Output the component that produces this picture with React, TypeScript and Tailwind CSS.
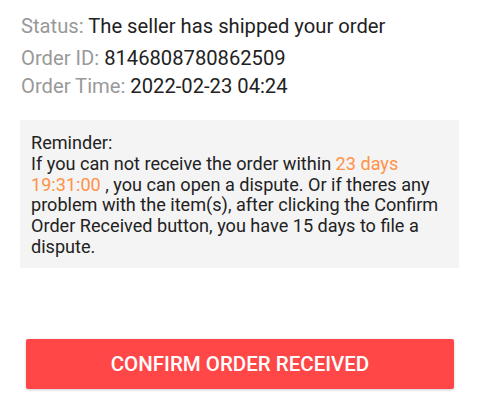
export default function App() {
  return (
    <div className="w-[480px] h-[417px] bg-white font-['Roboto',sans-serif] overflow-hidden">
      <div className="px-[21px] pt-[14px] text-[20.2px] leading-[24px] text-[#222]">
        <div>
          <span className="text-[#999]">Status: </span>The seller has shipped your order
        </div>
        <div className="mt-[8px]">
          <span className="text-[#999]">Order ID: </span>8146808780862509
        </div>
        <div className="mt-[4px]">
          <span className="text-[#999]">Order Time: </span>2022-02-23 04:24
        </div>
      </div>

      <div className="mx-[20px] mt-[22px] w-[439px] h-[148px] bg-[#f4f4f4] px-[11px] pt-[13px] text-[18.1px] leading-[20.8px] text-[#222]">
        Reminder:
        <br />
        If you can not receive the order within <span className="text-[#ff9247]">23 days 19:31:00</span> , you can open a
        dispute. Or if theres any problem with the item(s), after clicking the Confirm Order Received button, you have 15
        days to file a dispute.
      </div>

      <div className="flex justify-center mt-[71px]">
        <button className="w-[428px] h-[50px] bg-[#ff4747] text-white text-[20.5px] font-medium rounded-[2px] shadow-[0_1px_3px_rgba(0,0,0,0.2)]">
          CONFIRM ORDER RECEIVED
        </button>
      </div>
    </div>
  );
}
